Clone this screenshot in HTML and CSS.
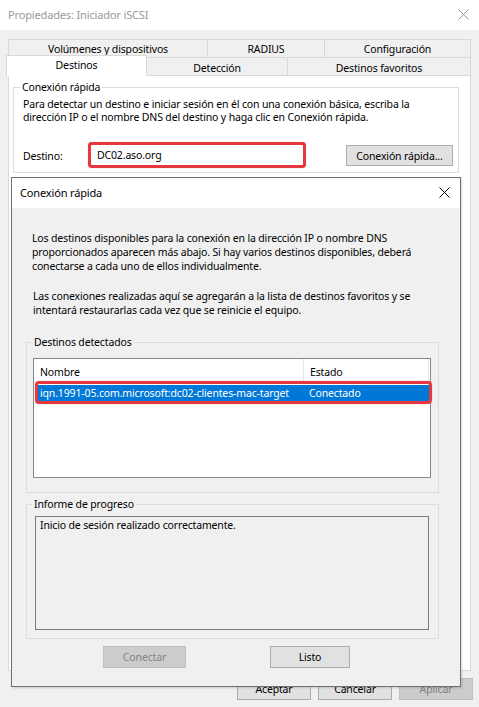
FILE: index.html
```html
<!DOCTYPE html>
<html lang="es">
<head>
<meta charset="utf-8">
<title>Propiedades: Iniciador iSCSI</title>
<link rel="stylesheet" href="styles.css">
</head>
<body>
<div class="win">
  <div class="titlebar">
    <span class="title">Propiedades: Iniciador iSCSI</span>
    <svg class="close main-close" width="11" height="11" viewBox="0 0 11 11"><path d="M0.5 0.5 L10.5 10.5 M10.5 0.5 L0.5 10.5" /></svg>
  </div>
  <div class="tabs">
    <div class="tabrow r1">
      <div class="tab t-vol">Volúmenes y dispositivos</div>
      <div class="tab t-rad">RADIUS</div>
      <div class="tab t-conf">Configuración</div>
    </div>
    <div class="tabrow r2">
      <div class="tab sel t-dest">Destinos</div>
      <div class="tab t-det">Detección</div>
      <div class="tab t-fav">Destinos favoritos</div>
    </div>
  </div>
  <div class="panel">
    <fieldset class="group quick">
      <legend>Conexión rápida</legend>
      <p class="quick-text">Para detectar un destino e iniciar sesión en él con una conexión básica, escriba la dirección IP o el nombre DNS del destino y haga clic en Conexión rápida.</p>
      <div class="dest-row">
        <span class="dest-label">Destino:</span>
        <div class="dest-input">DC02.aso.org</div>
        <button class="btn quick-btn">Conexión rápida...</button>
      </div>
    </fieldset>
  </div>
  <div class="footer">
    <button class="btn foot-btn">Aceptar</button>
    <button class="btn foot-btn">Cancelar</button>
    <button class="btn foot-btn disabled">Aplicar</button>
  </div>
</div>

<div class="dialog">
  <div class="dlg-title">
    <span>Conexión rápida</span>
    <svg class="close dlg-close" width="11" height="11" viewBox="0 0 11 11"><path d="M0.5 0.5 L10.5 10.5 M10.5 0.5 L0.5 10.5" /></svg>
  </div>
  <div class="dlg-body">
    <p class="p1">Los destinos disponibles para la conexión en la dirección IP o nombre DNS proporcionados aparecen más abajo. Si hay varios destinos disponibles, deberá conectarse a cada uno de ellos individualmente.</p>
    <p class="p2">Las conexiones realizadas aquí se agregarán a la lista de destinos favoritos y se intentará restaurarlas cada vez que se reinicie el equipo.</p>
    <fieldset class="group detected">
      <legend>Destinos detectados</legend>
      <div class="list">
        <div class="list-head">
          <div class="col c1">Nombre</div>
          <div class="col c2">Estado</div>
        </div>
        <div class="list-row selected">
          <div class="col c1">iqn.1991-05.com.microsoft:dc02-clientes-mac-target</div>
          <div class="col c2">Conectado</div>
        </div>
        <div class="highlight"></div>
      </div>
    </fieldset>
    <fieldset class="group progress">
      <legend>Informe de progreso</legend>
      <div class="progress-box">Inicio de sesión realizado correctamente.</div>
    </fieldset>
    <div class="dlg-buttons">
      <button class="btn dlg-btn disabled">Conectar</button>
      <button class="btn dlg-btn listo">Listo</button>
    </div>
  </div>
</div>
</body>
</html>
```

FILE: styles.css
```css
* { box-sizing: border-box; }

html, body {
  margin: 0;
  padding: 0;
}

body {
  width: 479px;
  height: 707px;
  background: #f0f0f0;
  font-family: "Noto Sans", "Open Sans", sans-serif;
  font-size: 10.5px;
  letter-spacing: -0.15px;
  color: #000;
  position: relative;
  overflow: hidden;
}

.win {
  width: 479px;
  height: 707px;
}

.titlebar {
  height: 30px;
  background: #fff;
  display: flex;
  align-items: center;
  justify-content: space-between;
  padding: 0 10px 2px 8px;
}

.title {
  color: #999;
  font-size: 11px;
}

.close path {
  fill: none;
  stroke-width: 1;
}

.main-close path { stroke: #9a9a9a; }
.dlg-close path { stroke: #000; }

.tabs {
  margin: 9px 8px 0 8px;
}

.tabrow {
  display: flex;
}

.tab {
  border: 1px solid #d9d9d9;
  border-bottom: none;
  background: #f0f0f0;
  display: flex;
  align-items: center;
  justify-content: center;
  height: 18px;
  line-height: 14px;
  padding-top: 1px;
}

.tab + .tab { margin-left: -1px; }

.r1 .t-vol { width: 200px; }
.r1 .t-rad { width: 118px; }
.r1 .t-conf { width: 147px; }

.r2 {
  margin-top: -2px;
  align-items: flex-end;
}

.r2 .tab { padding-top: 2px; }

.r2 .t-dest {
  width: 141px;
  height: 21px;
  margin-left: -2px;
  margin-bottom: -1px;
  background: #fff;
  position: relative;
  z-index: 1;
  padding-top: 0;
  padding-bottom: 2px;
}

.r2 .t-det { width: 142px; }
.r2 .t-fav { width: 184px; }

.panel {
  margin: 0 8px;
  height: 596px;
  background: #fff;
  border: 1px solid #d9d9d9;
  padding-top: 4px;
}

.group {
  margin: 0;
  padding: 0;
  border: 1px solid #dcdcdc;
  min-width: 0;
}

.group legend {
  padding: 0 2px;
  line-height: 14px;
}

.quick {
  margin: 0 11px 0 4px;
  padding: 4px 5px 4px 9px;
}

.quick legend { margin-left: -3px; }

.quick-text {
  margin: 0;
  line-height: 13px;
}

.dest-row {
  display: flex;
  align-items: center;
  height: 26px;
  margin-top: 18px;
}

.dest-label {
  width: 65px;
  padding-top: 2px;
}

.dest-input {
  width: 218px;
  height: 26px;
  border: 3px solid #e5393f;
  border-radius: 4px;
  background: #fff;
  padding: 2px 0 0 6px;
  line-height: 16px;
  box-shadow: 0 0 1px rgba(120, 0, 0, 0.5);
}

.btn {
  font-family: inherit;
  font-size: 10.5px;
  letter-spacing: inherit;
  color: #000;
  background: #e1e1e1;
  border: 1px solid #adadad;
  padding: 0;
  margin: 0;
  line-height: 14px;
}

.btn.disabled {
  background: #cccccc;
  border-color: #bfbfbf;
  color: #838383;
}

.quick-btn {
  margin-left: auto;
  width: 107px;
  height: 21px;
  margin-top: 1px;
}

.footer {
  display: flex;
  justify-content: flex-end;
  gap: 7px;
  margin: 7px 6px 0 0;
}

.foot-btn {
  width: 74px;
  height: 22px;
}

/* Dialog window on top of the property sheet */
.dialog {
  position: absolute;
  left: 11px;
  top: 177px;
  width: 450px;
  height: 510px;
  border: 1px solid #707070;
  background: #f0f0f0;
  box-shadow: 1px 1px 2px rgba(0, 0, 0, 0.15);
}

.dlg-title {
  height: 30px;
  background: #fff;
  display: flex;
  align-items: center;
  justify-content: space-between;
  padding: 0 10px 1px 8px;
  font-size: 11px;
}

.dlg-body {
  padding: 23px 0 0 14px;
}

.dlg-body p {
  margin: 0;
  width: 404px;
  line-height: 14px;
  padding-left: 6px;
}

.dlg-body .p2 {
  margin-top: 16px;
  padding-left: 7px;
}

.detected {
  margin: 18px 21px 0 0;
  padding: 9px 6px 14px 6px;
}

.detected legend { margin-left: -1px; }
.progress legend { margin-left: -3px; }

.list {
  position: relative;
  width: 398px;
  height: 120px;
  background: #fff;
  border: 1px solid #828790;
}

.list-head {
  display: flex;
  height: 26px;
  align-items: center;
}

.list-head .col {
  height: 26px;
  display: flex;
  align-items: center;
  padding-left: 6px;
  border-right: 1px solid #e5e5e5;
}

.c1 { width: 270px; }
.c2 { width: 125px; }

.list-row {
  display: flex;
  height: 16px;
  align-items: center;
  margin: 0 1px;
}

.list-row .col {
  padding-left: 5px;
  line-height: 16px;
  white-space: nowrap;
}

.list-row .c1 { width: 269px; }

.list-row.selected {
  background: #0078d7;
  color: #fff;
}

.highlight {
  position: absolute;
  left: 1px;
  top: 22px;
  width: 397px;
  height: 23px;
  border: 3px solid #e5393f;
  border-radius: 4px;
  box-shadow: 0 0 1px rgba(120, 0, 0, 0.5);
}

.progress {
  margin: 4px 21px 0 0;
  padding: 5px 9px 8px 8px;
}

.progress-box {
  width: 394px;
  height: 114px;
  border: 1px solid #7a7a7a;
  background: #f0f0f0;
  padding: 1px 0 0 4px;
  line-height: 14px;
}

.dlg-buttons {
  display: flex;
  gap: 84px;
  margin-top: 7px;
  padding-left: 77px;
}

.dlg-btn {
  height: 22px;
}

.dlg-btn.disabled { width: 83px; }
.dlg-btn.listo { width: 80px; }
```
